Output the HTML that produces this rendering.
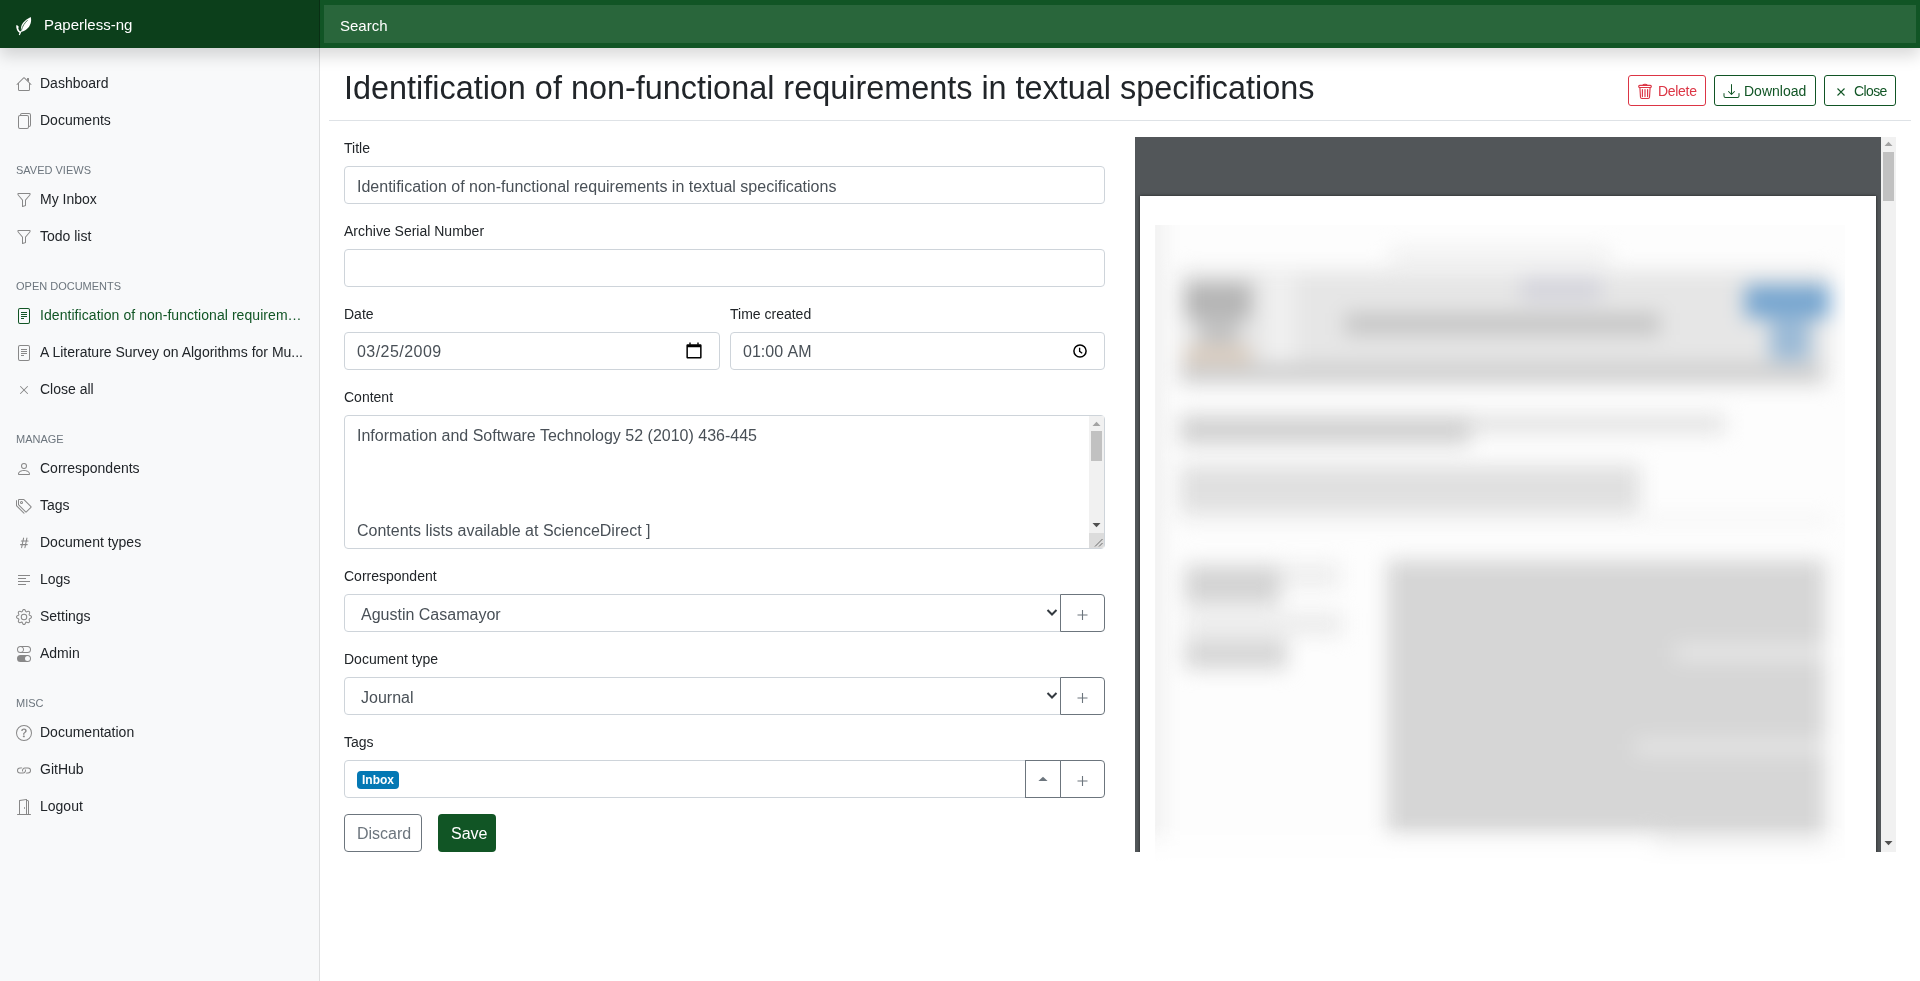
<!DOCTYPE html>
<html><head><meta charset="utf-8"><title>Paperless-ng</title>
<style>
*{box-sizing:border-box;margin:0;padding:0}
html,body{width:1920px;height:981px;overflow:hidden}
body{position:relative;will-change:transform;background:#fff;font-family:"Liberation Sans",sans-serif;color:#212529}
.a{position:absolute}
svg{display:block}
#nav{left:0;top:0;width:1920px;height:48px;background:#115525;box-shadow:0 8px 16px rgba(0,0,0,.15);z-index:10}
#brand{left:0;top:0;width:320px;height:48px;background:rgba(0,0,0,.25);box-shadow:inset -1px 0 0 rgba(0,0,0,.25)}
#brandtxt{left:44px;top:14px;font-size:15px;line-height:21px;color:#fff;white-space:nowrap}
#search{left:324px;top:5px;width:1592px;height:38px;background:rgba(255,255,255,.1)}
#searchtxt{left:340px;top:15px;font-size:15px;line-height:21px;color:#fff;white-space:nowrap}
#side{left:0;top:48px;width:320px;height:933px;background:#f8f9fa;box-shadow:inset -1px 0 0 rgba(0,0,0,.1)}
.ni{position:absolute;left:40px;font-size:14px;line-height:21px;white-space:nowrap;color:#212529}
.ic{position:absolute;left:16px;width:16px;height:16px;fill:#888;color:#888}
.hd{position:absolute;left:16px;font-size:11px;line-height:18px;color:#6c757d;text-transform:uppercase;white-space:nowrap}
.lbl{position:absolute;font-size:14px;line-height:21px;white-space:nowrap;color:#212529}
.inp{position:absolute;border:1px solid #ced4da;border-radius:4px;background:#fff}
.it{position:absolute;font-size:16px;line-height:24px;color:#495057;white-space:nowrap}
.btn{position:absolute;border:1px solid;border-radius:3px;background:#fff}
.bt{position:absolute;font-size:14px;line-height:21px;white-space:nowrap}
</style></head><body>

<div id="nav" class="a">
  <div id="brand" class="a"></div>
  <svg class="a" style="left:0;top:0" width="40" height="48" viewBox="0 0 40 48"><path fill="#fff" d="M30.7 16.9C31.9 21 30.6 26 26.6 29.3 24.9 30.8 22.9 31.6 21.2 31.9 20.5 29 20.9 25.6 22.9 23 24.9 20.3 28 18.4 30.7 16.9z"/><path fill="#fff" d="M16.2 25.3c1.1-.1 2.1.6 2.6 1.8l-.6.9c.4 1.7 1.3 2.8 2.1 3.6l-.6 1.3C17.4 31.6 16 29 16.2 25.3z"/><path d="M20.9 31.3L19.3 35" stroke="#fff" stroke-width="1.2" fill="none"/><path d="M27.6 20.2C25 22.6 22.4 26 21.3 30.6" stroke="#0d401c" stroke-width=".7" fill="none"/></svg>
  <div id="brandtxt" class="a">Paperless-ng</div>
  <div id="search" class="a"></div>
  <div id="searchtxt" class="a">Search</div>
</div>

<div id="side" class="a"></div>
<!-- sidebar items -->
<svg class="ic" style="top:76px" viewBox="0 0 16 16"><path fill-rule="evenodd" d="M2 13.5V7h1v6.5a.5.5 0 0 0 .5.5h9a.5.5 0 0 0 .5-.5V7h1v6.5a1.5 1.5 0 0 1-1.5 1.5h-9A1.5 1.5 0 0 1 2 13.5zm11-11V6l-2-2V2.5a.5.5 0 0 1 .5-.5h1a.5.5 0 0 1 .5.5z"/><path fill-rule="evenodd" d="M7.293 1.5a1 1 0 0 1 1.414 0l6.647 6.646a.5.5 0 0 1-.708.708L8 2.207 1.354 8.854a.5.5 0 1 1-.708-.708L7.293 1.5z"/></svg>
<div class="ni" style="top:73px">Dashboard</div>
<svg class="ic" style="top:113px" viewBox="0 0 16 16"><path d="M13 0H6a2 2 0 0 0-2 2 2 2 0 0 0-2 2v10a2 2 0 0 0 2 2h7a2 2 0 0 0 2-2 2 2 0 0 0 2-2V2a2 2 0 0 0-2-2zm0 13V4a2 2 0 0 0-2-2H5a1 1 0 0 1 1-1h7a1 1 0 0 1 1 1v10a1 1 0 0 1-1 1zM3 4a1 1 0 0 1 1-1h7a1 1 0 0 1 1 1v10a1 1 0 0 1-1 1H4a1 1 0 0 1-1-1V4z"/></svg>
<div class="ni" style="top:110px">Documents</div>

<div class="hd" style="top:161px">Saved views</div>
<svg class="ic" style="top:192px" viewBox="0 0 16 16"><path d="M1.5 1.5A.5.5 0 0 1 2 1h12a.5.5 0 0 1 .5.5v1.2a.5.5 0 0 1-.128.334L10 8.2V13.5a.5.5 0 0 1-.342.474l-3 1A.5.5 0 0 1 6 14.5V8.2L1.628 3.034A.5.5 0 0 1 1.5 2.7v-1.2zm1 .5v.7l4.372 5.158A.5.5 0 0 1 7 8.1v5.706l2-.666V8.1a.5.5 0 0 1 .128-.334L13.5 2.7V2h-11z"/></svg>
<div class="ni" style="top:189px">My Inbox</div>
<svg class="ic" style="top:229px" viewBox="0 0 16 16"><path d="M1.5 1.5A.5.5 0 0 1 2 1h12a.5.5 0 0 1 .5.5v1.2a.5.5 0 0 1-.128.334L10 8.2V13.5a.5.5 0 0 1-.342.474l-3 1A.5.5 0 0 1 6 14.5V8.2L1.628 3.034A.5.5 0 0 1 1.5 2.7v-1.2zm1 .5v.7l4.372 5.158A.5.5 0 0 1 7 8.1v5.706l2-.666V8.1a.5.5 0 0 1 .128-.334L13.5 2.7V2h-11z"/></svg>
<div class="ni" style="top:226px">Todo list</div>

<div class="hd" style="top:277px">Open documents</div>
<svg class="ic" style="top:308px;fill:#115525" viewBox="0 0 16 16"><path fill-rule="evenodd" d="M4 0h8a2 2 0 0 1 2 2v12a2 2 0 0 1-2 2H4a2 2 0 0 1-2-2V2a2 2 0 0 1 2-2zm0 1a1 1 0 0 0-1 1v12a1 1 0 0 0 1 1h8a1 1 0 0 0 1-1V2a1 1 0 0 0-1-1H4z"/><path d="M5 4h6v1H5zM5 6h6v1H5zM5 8h6v1H5zM5 10h3v1H5z"/></svg>
<div class="ni" style="top:305px;color:#115525;letter-spacing:.06px">Identification of non-functional requirem…</div>
<svg class="ic" style="top:345px" viewBox="0 0 16 16"><path fill-rule="evenodd" d="M4 0h8a2 2 0 0 1 2 2v12a2 2 0 0 1-2 2H4a2 2 0 0 1-2-2V2a2 2 0 0 1 2-2zm0 1a1 1 0 0 0-1 1v12a1 1 0 0 0 1 1h8a1 1 0 0 0 1-1V2a1 1 0 0 0-1-1H4z"/><path d="M5 4h6v1H5zM5 6h6v1H5zM5 8h6v1H5zM5 10h3v1H5z"/></svg>
<div class="ni" style="top:342px">A Literature Survey on Algorithms for Mu...</div>
<svg class="ic" style="top:382px" viewBox="0 0 16 16"><path fill-rule="evenodd" d="M11.854 4.146a.5.5 0 0 1 0 .708l-7 7a.5.5 0 0 1-.708-.708l7-7a.5.5 0 0 1 .708 0z"/><path fill-rule="evenodd" d="M4.146 4.146a.5.5 0 0 0 0 .708l7 7a.5.5 0 0 0 .708-.708l-7-7a.5.5 0 0 0-.708 0z"/></svg>
<div class="ni" style="top:379px">Close all</div>

<div class="hd" style="top:430px">Manage</div>
<svg class="ic" style="top:461px" viewBox="0 0 16 16"><path fill-rule="evenodd" d="M13 14s1 0 1-1-1-4-6-4-6 3-6 4 1 1 1 1h10zm-9.995-.944v-.002.002zM3.022 13h9.956a.274.274 0 0 0 .014-.002l.008-.002c-.001-.246-.154-.986-.832-1.664C11.516 10.68 10.289 10 8 10c-2.29 0-3.516.68-4.168 1.332-.678.678-.83 1.418-.832 1.664a1.05 1.05 0 0 0 .022.004zm9.974.056v-.002.002zM8 7a2 2 0 1 0 0-4 2 2 0 0 0 0 4zm3-2a3 3 0 1 1-6 0 3 3 0 0 1 6 0z"/></svg>
<div class="ni" style="top:458px">Correspondents</div>
<svg class="ic" style="top:498px" viewBox="0 0 16 16"><path fill-rule="evenodd" d="M3 2v4.586l7 7L14.586 9l-7-7H3zM2 2a1 1 0 0 1 1-1h4.586a1 1 0 0 1 .707.293l7 7a1 1 0 0 1 0 1.414l-4.586 4.586a1 1 0 0 1-1.414 0l-7-7A1 1 0 0 1 2 6.586V2z"/><path fill-rule="evenodd" d="M5.5 5a.5.5 0 1 0 0-1 .5.5 0 0 0 0 1zm0 1a1.5 1.5 0 1 0 0-3 1.5 1.5 0 0 0 0 3z"/><path d="M1 7.086a1 1 0 0 0 .293.707L8.75 15.25l-.043.043a1 1 0 0 1-1.414 0l-7-7A1 1 0 0 1 0 7.586V3a1 1 0 0 1 1-1v5.086z"/></svg>
<div class="ni" style="top:495px">Tags</div>
<svg class="ic" style="top:535px" viewBox="0 0 16 16"><path d="M8.39 12.648a1.32 1.32 0 0 0-.015.18c0 .305.21.508.5.508.266 0 .492-.172.555-.477l.554-2.703h1.204c.421 0 .617-.234.617-.547 0-.312-.188-.53-.617-.53h-.985l.516-2.524h1.265c.43 0 .618-.227.618-.547 0-.313-.188-.524-.618-.524h-1.046l.476-2.304a1.06 1.06 0 0 0 .016-.164.51.51 0 0 0-.516-.516.54.54 0 0 0-.539.43l-.523 2.554H7.617l.477-2.304c.008-.04.015-.118.015-.164a.512.512 0 0 0-.523-.516.539.539 0 0 0-.531.43L6.53 5.484H5.414c-.43 0-.617.22-.617.532 0 .312.187.539.617.539h.906l-.515 2.523H4.609c-.421 0-.609.219-.609.531 0 .313.188.547.61.547h.976l-.516 2.492c-.008.04-.015.125-.015.18 0 .305.21.508.5.508.265 0 .492-.172.554-.477l.555-2.703h2.242l-.515 2.492zm-1-6.109h2.266l-.515 2.563H6.859l.532-2.563z"/></svg>
<div class="ni" style="top:532px">Document types</div>
<svg class="ic" style="top:572px" viewBox="0 0 16 16"><path d="M2 3h12v1H2zM2 6h8v1H2zM2 9h12v1H2zM2 12h8v1H2z"/></svg>
<div class="ni" style="top:569px">Logs</div>
<svg class="ic" style="top:609px" viewBox="0 0 16 16"><path fill-rule="evenodd" d="M8.837 1.626c-.246-.835-1.428-.835-1.674 0l-.094.319A1.873 1.873 0 0 1 4.377 3.06l-.292-.16c-.764-.415-1.6.42-1.184 1.185l.159.292a1.873 1.873 0 0 1-1.115 2.692l-.319.094c-.835.246-.835 1.428 0 1.674l.319.094a1.873 1.873 0 0 1 1.115 2.693l-.16.291c-.415.764.42 1.6 1.185 1.184l.292-.159a1.873 1.873 0 0 1 2.692 1.116l.094.318c.246.835 1.428.835 1.674 0l.094-.319a1.873 1.873 0 0 1 2.693-1.115l.291.16c.764.415 1.6-.42 1.184-1.185l-.159-.291a1.873 1.873 0 0 1 1.116-2.693l.318-.094c.835-.246.835-1.428 0-1.674l-.319-.094a1.873 1.873 0 0 1-1.115-2.692l.16-.292c.415-.764-.42-1.6-1.185-1.184l-.291.159A1.873 1.873 0 0 1 8.930 1.945l-.094-.319zm-2.633-.283c.527-1.790 3.065-1.790 3.592 0l.094.319a.873.873 0 0 0 1.255.520l.292-.160c1.640-.892 3.434.901 2.540 2.541l-.159.292a.873.873 0 0 0 .520 1.255l.319.094c1.790.527 1.790 3.065 0 3.592l-.319.094a.873.873 0 0 0-.520 1.255l.160.292c.893 1.640-.902 3.434-2.541 2.540l-.292-.159a.873.873 0 0 0-1.255.520l-.094.319c-.527 1.790-3.065 1.790-3.592 0l-.094-.319a.873.873 0 0 0-1.255-.520l-.292.160c-1.640.893-3.433-.902-2.540-2.541l.159-.292a.873.873 0 0 0-.520-1.255l-.319-.094c-1.790-.527-1.790-3.065 0-3.592l.319-.094a.873.873 0 0 0 .520-1.255l-.160-.292c-.892-1.640.902-3.433 2.541-2.540l.292.159a.873.873 0 0 0 1.255-.520l.094-.319z"/><path fill-rule="evenodd" d="M8 5.754a2.246 2.246 0 1 0 0 4.492 2.246 2.246 0 0 0 0-4.492zM4.754 8a3.246 3.246 0 1 1 6.492 0 3.246 3.246 0 0 1-6.492 0z"/></svg>
<div class="ni" style="top:606px">Settings</div>
<svg class="ic" style="top:646px" viewBox="0 0 16 16"><path fill-rule="evenodd" d="M4.5 9a3.5 3.5 0 1 0 0 7h7a3.5 3.5 0 1 0 0-7h-7zm7 6a2.5 2.5 0 1 0 0-5 2.5 2.5 0 0 0 0 5zm-7-14a2.5 2.5 0 1 0 0 5 2.5 2.5 0 0 0 0-5zm2.45 0A3.49 3.49 0 0 1 8 3.5 3.49 3.49 0 0 1 6.95 6h4.55a2.5 2.5 0 0 0 0-5H6.95zM4.5 0h7a3.5 3.5 0 1 1 0 7h-7a3.5 3.5 0 1 1 0-7z"/></svg>
<div class="ni" style="top:643px">Admin</div>

<div class="hd" style="top:694px">Misc</div>
<svg class="ic" style="top:725px" viewBox="0 0 16 16"><path fill-rule="evenodd" d="M8 15A7 7 0 1 0 8 1a7 7 0 0 0 0 14zm0 1A8 8 0 1 0 8 0a8 8 0 0 0 0 16z"/><path d="M5.25 6.033h1.32c0-.781.458-1.384 1.360-1.384.685 0 1.313.343 1.313 1.168 0 .635-.374.927-.965 1.371-.673.489-1.206 1.060-1.168 1.987l.007.463h1.307v-.355c0-.718.273-.927 1.010-1.486.609-.463 1.244-.977 1.244-2.056 0-1.511-1.276-2.241-2.673-2.241-1.326 0-2.786.647-2.754 2.533zm1.562 5.516c0 .533.425.927 1.010.927.609 0 1.028-.394 1.028-.927 0-.552-.420-.940-1.029-.940-.584 0-1.009.388-1.009.940z"/></svg>
<div class="ni" style="top:722px">Documentation</div>
<svg class="ic" style="top:762px" viewBox="0 0 16 16"><path d="M6.354 5.5H4a3 3 0 0 0 0 6h3a3 3 0 0 0 2.830-4H9c-.086 0-.170.010-.250.031A2 2 0 0 1 7 10.5H4a2 2 0 1 1 0-4h1.535c.218-.376.495-.714.820-1z"/><path d="M9 5.5a3 3 0 0 0-2.830 4h1.098A2 2 0 0 1 9 6.5h3a2 2 0 1 1 0 4h-1.535a4.020 4.020 0 0 1-.820 1H12a3 3 0 1 0 0-6H9z"/></svg>
<div class="ni" style="top:759px">GitHub</div>
<svg class="ic" style="top:799px" viewBox="0 0 16 16"><path d="M8.5 10c-.276 0-.5-.448-.5-1s.224-1 .5-1 .5.448.5 1-.224 1-.5 1z"/><path d="M10.828.122A.5.5 0 0 1 11 .5V1h.5A1.5 1.5 0 0 1 13 2.5V15h1.5a.5.5 0 0 1 0 1h-13a.5.5 0 0 1 0-1H3V1.5a.5.5 0 0 1 .43-.495l7-1a.5.5 0 0 1 .398.117zM11.5 2H11v13h1V2.5a.5.5 0 0 0-.5-.5zM4 1.934V15h6V1.077l-6 .857z"/></svg>
<div class="ni" style="top:796px">Logout</div>

<!-- MAIN -->
<div class="a" style="left:344px;top:69px;font-size:32.4px;line-height:38px;white-space:nowrap;color:#212529">Identification of non-functional requirements in textual specifications</div>

<div class="btn" style="left:1628px;top:75px;width:78px;height:31px;border-color:#dc3545"></div>
<div class="btn" style="left:1714px;top:75px;width:102px;height:31px;border-color:#115525"></div>
<div class="btn" style="left:1824px;top:75px;width:72px;height:31px;border-color:#115525"></div>
<div class="bt" style="left:1658px;top:81px;color:#dc3545;letter-spacing:-.3px">Delete</div>
<div class="bt" style="left:1744px;top:81px;color:#115525">Download</div>
<div class="bt" style="left:1854px;top:81px;color:#115525;letter-spacing:-.6px">Close</div>

<div class="a" style="left:329px;top:120px;width:1582px;height:1px;background:#dee2e6"></div>

<!-- form -->
<div class="lbl" style="left:344px;top:138px">Title</div>
<div class="inp" style="left:344px;top:166px;width:761px;height:38px"></div>
<div class="it" style="left:357px;top:175px">Identification of non-functional requirements in textual specifications</div>

<div class="lbl" style="left:344px;top:221px">Archive Serial Number</div>
<div class="inp" style="left:344px;top:249px;width:761px;height:38px"></div>

<div class="lbl" style="left:344px;top:304px">Date</div>
<div class="inp" style="left:344px;top:332px;width:376px;height:38px"></div>
<div class="it" style="left:357px;top:340px;letter-spacing:.45px">03/25/2009</div>
<div class="lbl" style="left:730px;top:304px">Time created</div>
<div class="inp" style="left:730px;top:332px;width:375px;height:38px"></div>
<div class="it" style="left:743px;top:340px">01:00&nbsp;AM</div>

<div class="lbl" style="left:344px;top:387px">Content</div>
<div class="inp" style="left:344px;top:415px;width:761px;height:134px"></div>
<div class="it" style="left:357px;top:424px">Information and Software Technology 52 (2010) 436-445</div>
<div class="it" style="left:357px;top:519px">Contents lists available at ScienceDirect ]</div>

<div class="lbl" style="left:344px;top:566px">Correspondent</div>
<div class="inp" style="left:344px;top:594px;width:717px;height:38px;border-radius:4px 0 0 4px"></div>
<div class="it" style="left:361px;top:603px">Agustin Casamayor</div>
<div class="btn" style="left:1060px;top:594px;width:45px;height:38px;border-color:#6c757d;border-radius:0 4px 4px 0"></div>

<div class="lbl" style="left:344px;top:649px">Document type</div>
<div class="inp" style="left:344px;top:677px;width:717px;height:38px;border-radius:4px 0 0 4px"></div>
<div class="it" style="left:361px;top:686px">Journal</div>
<div class="btn" style="left:1060px;top:677px;width:45px;height:38px;border-color:#6c757d;border-radius:0 4px 4px 0"></div>

<div class="lbl" style="left:344px;top:732px">Tags</div>
<div class="inp" style="left:344px;top:760px;width:682px;height:38px;border-radius:4px 0 0 4px"></div>
<div class="btn" style="left:1025px;top:760px;width:36px;height:38px;border-color:#6c757d;border-radius:0"></div>
<div class="btn" style="left:1060px;top:760px;width:45px;height:38px;border-color:#6c757d;border-radius:0 4px 4px 0"></div>
<div class="a" style="left:357px;top:771px;width:42px;height:18px;background:#0478b4;border-radius:4px"></div>
<div class="a" style="left:362px;top:773px;font-size:12px;line-height:14px;font-weight:bold;color:#fff">Inbox</div>

<div class="btn" style="left:344px;top:814px;width:78px;height:38px;border-color:#6c757d;border-radius:4px"></div>
<div class="it" style="left:357px;top:822px;color:#6c757d">Discard</div>
<div class="a" style="left:438px;top:814px;width:58px;height:38px;background:#115525;border-radius:4px"></div>
<div class="it" style="left:451px;top:822px;color:#fff">Save</div>

<!-- preview -->
<div class="a" style="left:1135px;top:137px;width:746px;height:715px;background:#525659;overflow:hidden"><div class="a" style="left:5px;top:59px;width:736px;height:900px;background:#fff;box-shadow:0 0 3px rgba(0,0,0,.6)"></div></div>
<div class="a" style="left:1881px;top:137px;width:15px;height:715px;background:#f1f1f1"></div>
<div class="a" style="left:1883px;top:152px;width:11px;height:49px;background:#c1c1c1"></div>


<!-- header button icons -->
<svg class="a" style="left:1637px;top:83px" width="16" height="17" viewBox="0 0 16 17"><g fill="none" stroke="#dc3545" stroke-width="1.15" stroke-linecap="round" stroke-linejoin="round"><path d="M6 2.1c.3-.7 1-.9 2-.9s1.7.2 2 .9"/><rect x="1.7" y="2.3" width="12.6" height="2.2" rx="1"/><path d="M2.9 4.6l.6 9.6c.1.8.5 1.3 1.3 1.3h6.4c.8 0 1.2-.5 1.3-1.3l.6-9.6"/><path d="M5.4 6.6v7M8 6.6v7M10.6 6.6v7"/></g></svg>
<svg class="a" style="left:1723px;top:83px" width="17" height="16" viewBox="0 0 16 16"><path fill="#115525" fill-rule="evenodd" d="M.5 9.9a.5.5 0 0 1 .5.5v2.5a1 1 0 0 0 1 1h12a1 1 0 0 0 1-1v-2.5a.5.5 0 0 1 1 0v2.5a2 2 0 0 1-2 2H2a2 2 0 0 1-2-2v-2.5a.5.5 0 0 1 .5-.5z"/><path fill="#115525" fill-rule="evenodd" d="M7.646 11.854a.5.5 0 0 0 .708 0l3-3a.5.5 0 0 0-.708-.708L8.5 10.293V1.5a.5.5 0 0 0-1 0v8.793L5.354 8.146a.5.5 0 1 0-.708.708l3 3z"/></svg>
<svg class="a" style="left:1837px;top:88px" width="8" height="8" viewBox="0 0 8 8"><path stroke="#115525" stroke-width="1.1" d="M.5.5l7 7M7.5.5l-7 7"/></svg>

<!-- date / time icons -->
<svg class="a" style="left:686px;top:342px" width="16" height="17" viewBox="0 0 16 17"><g fill="#000"><path d="M3.3.5h1.4v2.2H3.3zM11.3.5h1.4v2.2h-1.4z"/><path fill-rule="evenodd" d="M1.8 2.2h12.4c.9 0 1.4.5 1.4 1.4v11.6c0 .9-.5 1.4-1.4 1.4H1.8c-.9 0-1.4-.5-1.4-1.4V3.6c0-.9.5-1.4 1.4-1.4zM1.9 5.3v9.6h12.2V5.3z"/></g></svg>
<svg class="a" style="left:1073px;top:344px" width="14" height="14" viewBox="0 0 14 14"><circle cx="7" cy="7" r="6.1" fill="none" stroke="#000" stroke-width="1.5"/><path d="M6.6 3.8v3.5l2.6 1.9" fill="none" stroke="#000" stroke-width="1.3"/></svg>

<!-- textarea scrollbar -->
<div class="a" style="left:1089px;top:416px;width:15px;height:132px;background:#f1f1f1"></div>
<svg class="a" style="left:1092px;top:421px" width="9" height="6" viewBox="0 0 9 6"><path d="M4.5.8L8.5 5H.5z" fill="#a3a3a3"/></svg>
<div class="a" style="left:1091px;top:431px;width:11px;height:30px;background:#c1c1c1"></div>
<svg class="a" style="left:1092px;top:522px" width="9" height="6" viewBox="0 0 9 6"><path d="M.5 1h8L4.5 5.2z" fill="#505050"/></svg>
<div class="a" style="left:1089px;top:533px;width:15px;height:15px;background:#dcdcdc;border-bottom-right-radius:3px"></div>
<svg class="a" style="left:1093px;top:537px" width="10" height="10" viewBox="0 0 10 10"><path d="M9.5 2L2 9.5M9.5 6L6 9.5" stroke="#6b6b6b" stroke-width="1"/></svg>

<!-- select chevrons & plus buttons -->
<svg class="a" style="left:1046px;top:608px" width="12" height="9" viewBox="0 0 12 9"><path d="M1.5 2l4.5 4.5L10.5 2" fill="none" stroke="#343a40" stroke-width="2"/></svg>
<svg class="a" style="left:1046px;top:691px" width="12" height="9" viewBox="0 0 12 9"><path d="M1.5 2l4.5 4.5L10.5 2" fill="none" stroke="#343a40" stroke-width="2"/></svg>
<svg class="a" style="left:1077px;top:610px" width="11" height="11" viewBox="0 0 11 11"><path d="M5.5 0v10M.5 5h10" stroke="#6c757d" stroke-width="1.1"/></svg>
<svg class="a" style="left:1077px;top:693px" width="11" height="11" viewBox="0 0 11 11"><path d="M5.5 0v10M.5 5h10" stroke="#6c757d" stroke-width="1.1"/></svg>
<svg class="a" style="left:1077px;top:776px" width="11" height="11" viewBox="0 0 11 11"><path d="M5.5 0v10M.5 5h10" stroke="#6c757d" stroke-width="1.1"/></svg>
<svg class="a" style="left:1038px;top:776px" width="10" height="6" viewBox="0 0 10 6"><path d="M5 .8L9.6 5H.4z" fill="#6c757d"/></svg>

<!-- pdf viewer details -->
<svg class="a" style="left:1884px;top:141px" width="9" height="6" viewBox="0 0 9 6"><path d="M4.5.8L8.5 5H.5z" fill="#a3a3a3"/></svg>
<svg class="a" style="left:1884px;top:840px" width="9" height="6" viewBox="0 0 9 6"><path d="M.5 1h8L4.5 5.2z" fill="#505050"/></svg>


<div class="a" style="left:1155px;top:225px;width:690px;height:644px;overflow:hidden;background:#fdfdfd;-webkit-mask-image:linear-gradient(#000 93%,transparent);mask-image:linear-gradient(#000 93%,transparent)">
  <div class="a" style="left:0;top:0;width:690px;height:655px;filter:blur(10px)">
    <div class="a" style="left:-12px;top:-20px;width:20px;height:640px;background:#efefef"></div>
    <div class="a" style="left:235px;top:25px;width:220px;height:12px;background:#ececec"></div>
    <div class="a" style="left:25px;top:45px;width:650px;height:115px;background:#e6e6e6"></div>
    <div class="a" style="left:30px;top:58px;width:66px;height:36px;background:#b5b5b5"></div><div class="a" style="left:44px;top:92px;width:40px;height:28px;background:#c2c2c2"></div>
    <div class="a" style="left:30px;top:122px;width:66px;height:24px;background:#dcccbc"></div>
    <div class="a" style="left:110px;top:50px;width:30px;height:100px;background:#f0f0f0"></div>
    <div class="a" style="left:366px;top:52px;width:80px;height:24px;background:#d4d4dc"></div>
    <div class="a" style="left:190px;top:88px;width:315px;height:22px;background:#c6c6c6"></div>
    <div class="a" style="left:25px;top:138px;width:640px;height:20px;background:#cfcfcf"></div>
    <div class="a" style="left:590px;top:60px;width:85px;height:33px;background:#77a6d0"></div>
    <div class="a" style="left:615px;top:90px;width:40px;height:45px;background:#9bbad6"></div>
    <div class="a" style="left:25px;top:190px;width:290px;height:30px;background:#d2d2d2"></div>
    <div class="a" style="left:315px;top:190px;width:255px;height:18px;background:#e2e2e2"></div>
    <div class="a" style="left:25px;top:240px;width:460px;height:48px;background:#e0e0e0"></div>
    <div class="a" style="left:25px;top:292px;width:650px;height:6px;background:#f0f0f0"></div>
    <div class="a" style="left:30px;top:340px;width:95px;height:40px;background:#d4d4d4"></div><div class="a" style="left:125px;top:338px;width:60px;height:25px;background:#eeeeee"></div>
    <div class="a" style="left:30px;top:388px;width:158px;height:22px;background:#ebebeb"></div>
    <div class="a" style="left:30px;top:414px;width:102px;height:30px;background:#d6d6d6"></div>
    <div class="a" style="left:232px;top:335px;width:438px;height:275px;background:#d6d6d6"></div>
    <div class="a" style="left:520px;top:420px;width:150px;height:15px;background:#e8e8e8"></div>
    <div class="a" style="left:480px;top:515px;width:190px;height:14px;background:#e6e6e6"></div>
    <div class="a" style="left:500px;top:610px;width:170px;height:20px;background:#ececec"></div>
  </div>
</div>

</body></html>
